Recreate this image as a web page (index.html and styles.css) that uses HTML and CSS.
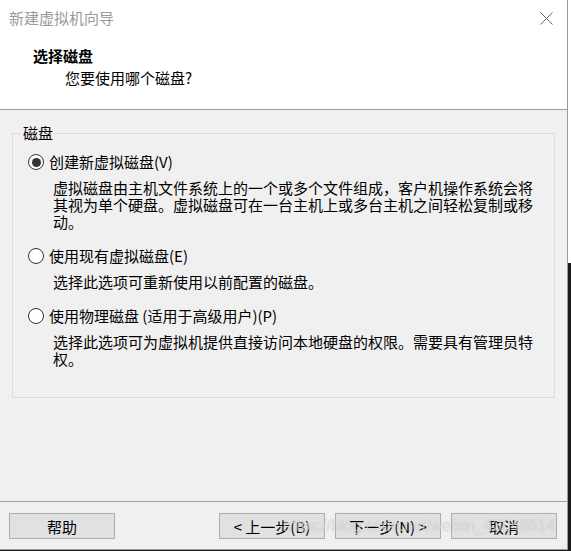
FILE: index.html
```html
<!DOCTYPE html>
<html lang="zh-CN">
<head>
  <meta charset="UTF-8">
  <title>新建虚拟机向导</title>
  <link rel="stylesheet" href="styles.css">
</head>
<body>
  <div class="wizard">
    <div class="header">
      <div class="titlebar">
        <span class="title">新建虚拟机向导</span>
        <svg class="close" width="13" height="13" viewBox="0 0 13 13">
          <path d="M0.5 0.5 L12.5 12.5 M12.5 0.5 L0.5 12.5" stroke="#666" stroke-width="1" fill="none"/>
        </svg>
      </div>
      <div class="heading">选择磁盘</div>
      <div class="subheading">您要使用哪个磁盘?</div>
    </div>

    <div class="content">
      <div class="group">
        <span class="group-label">磁盘</span>

        <div class="option">
          <label class="option-label"><span class="radio checked"></span>创建新虚拟磁盘(V)</label>
          <div class="desc">虚拟磁盘由主机文件系统上的一个或多个文件组成，客户机操作系统会将<br>其视为单个硬盘。虚拟磁盘可在一台主机上或多台主机之间轻松复制或移<br>动。</div>
        </div>

        <div class="option">
          <label class="option-label"><span class="radio"></span>使用现有虚拟磁盘(E)</label>
          <div class="desc">选择此选项可重新使用以前配置的磁盘。</div>
        </div>

        <div class="option">
          <label class="option-label"><span class="radio"></span>使用物理磁盘 (适用于高级用户)(P)</label>
          <div class="desc">选择此选项可为虚拟机提供直接访问本地硬盘的权限。需要具有管理员特<br>权。</div>
        </div>
      </div>
    </div>

    <div class="footer">
      <button class="btn">帮助</button>
      <div class="nav-buttons">
        <button class="btn">&lt; 上一步(B)</button>
        <button class="btn">下一步(N) &gt;</button>
        <button class="btn">取消</button>
      </div>
      <span class="watermark">https://blog.csdn.net/weixin_43848614</span>
    </div>
  </div>
</body>
</html>
```

FILE: styles.css
```css
* {
  box-sizing: border-box;
}

body {
  margin: 0;
  width: 571px;
  height: 551px;
  overflow: hidden;
  background: linear-gradient(#ffffff 0, #ffffff 263px, #1b1b1b 263px);
  font-family: "Noto Sans CJK SC", "Microsoft YaHei", sans-serif;
  font-size: 15px;
  color: #000;
}

.wizard {
  width: 568px;
  height: 550px;
  background: #f0f0f0;
  border-right: 1px solid #9a9a9a;
  border-bottom: 1px solid #9a9a9a;
  display: flex;
  flex-direction: column;
}

/* header */

.header {
  height: 110px;
  background: #fff;
  border-bottom: 1px solid #a0a0a0;
}

.titlebar {
  height: 36px;
  display: flex;
  align-items: center;
  justify-content: space-between;
  padding: 0 14px 0 9px;
}

.title {
  color: #999;
  line-height: 20px;
}

.close {
  display: block;
}

.heading {
  margin-top: 10px;
  padding-left: 33px;
  line-height: 20px;
  font-weight: bold;
}

.subheading {
  margin-top: 2px;
  padding-left: 65px;
  line-height: 20px;
}

/* group box */

.content {
  flex: 1;
  padding: 23px 12px 0 12px;
}

.group {
  position: relative;
  border: 1px solid #dcdcdc;
  padding: 18px 0 30px 15px;
  display: flex;
  flex-direction: column;
  gap: 16px;
}

.group-label {
  position: absolute;
  top: -10px;
  left: 8px;
  padding: 0 2px;
  line-height: 18px;
  background: #f0f0f0;
}

.option-label {
  display: flex;
  align-items: center;
  gap: 5px;
  line-height: 20px;
}

.radio {
  width: 16px;
  height: 16px;
  border: 1px solid #333;
  border-radius: 50%;
  background: #fff;
  display: flex;
  align-items: center;
  justify-content: center;
}

.radio.checked::after {
  content: "";
  width: 9px;
  height: 9px;
  border-radius: 50%;
  background: #333;
}

.desc {
  margin-top: 7px;
  padding-left: 25px;
  line-height: 17px;
}

/* footer */

.footer {
  position: relative;
  height: 48px;
  border-top: 1px solid #a0a0a0;
  padding: 11px 10px 0 9px;
  display: flex;
  justify-content: space-between;
  align-items: flex-start;
}

.nav-buttons {
  display: flex;
  gap: 10px;
}

.btn {
  width: 106px;
  height: 26px;
  padding: 0;
  background: #e1e1e1;
  border: 1px solid #adadad;
  font-family: inherit;
  font-size: 15px;
  color: #000;
}

.watermark {
  position: absolute;
  left: 283px;
  top: 15px;
  font-family: "Liberation Sans", Arial, sans-serif;
  font-size: 16px;
  color: rgba(255, 255, 255, 0.5);
  text-shadow: 0 0 1px rgba(120, 120, 120, 0.45);
  pointer-events: none;
}
```
